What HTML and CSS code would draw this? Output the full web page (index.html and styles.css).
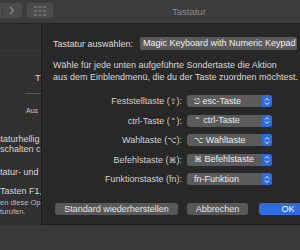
FILE: index.html
```html
<!DOCTYPE html>
<html lang="de">
<head>
<meta charset="utf-8">
<title>Tastatur</title>
<link rel="stylesheet" href="styles.css">
</head>
<body>
<div class="toolbar">
  <div class="seg">
    <span class="seg-div"></span>
    <svg class="chev" width="6" height="9" viewBox="0 0 6 9"><path d="M1 1 L4.5 4.5 L1 8" fill="none" stroke="#8a8a8a" stroke-width="1.3"/></svg>
  </div>
  <div class="gridbtn">
    <svg width="12" height="10" viewBox="0 0 12 10">
      <g fill="#6e6e6e">
        <rect x="0" y="0" width="3" height="2"/><rect x="4.5" y="0" width="3" height="2"/><rect x="9" y="0" width="3" height="2"/>
        <rect x="0" y="4" width="3" height="2"/><rect x="4.5" y="4" width="3" height="2"/><rect x="9" y="4" width="3" height="2"/>
        <rect x="0" y="8" width="3" height="2"/><rect x="4.5" y="8" width="3" height="2"/><rect x="9" y="8" width="3" height="2"/>
      </g>
    </svg>
  </div>
  <div class="title">Tastatur</div>
</div>
<div class="main">
  <div class="side">
    <div class="tabline"></div>
    <div class="s-t">T</div>
    <div class="s-track"></div>
    <div class="s-aus">Aus</div>
    <div class="s-l s-l1">staturhellig</div>
    <div class="s-l s-l2">schalten c</div>
    <div class="s-l s-l3">tatur- und</div>
    <div class="s-l s-l4">Tasten F1,</div>
    <div class="s-sm s-l5">en diese Op</div>
    <div class="s-sm s-l6">turufen.</div>
  </div>
  <div class="sheet">
    <div class="head">
      <div class="head-label">Tastatur auswählen:</div>
      <div class="head-pop">Magic Keyboard with Numeric Keypad</div>
    </div>
    <p class="desc">Wähle für jede unten aufgeführte Sondertaste die Aktion<br>aus dem Einblendmenü, die du der Taste zuordnen möchtest.</p>
    <div class="rows">
      <div class="lbl">Feststelltaste (<span class="sym">⇪</span>):</div>
      <div class="pop"><span class="pop-text"><span class="sym">⎋</span> esc-Taste</span><span class="step"><svg width="6" height="9" viewBox="0 0 6 9"><path d="M1 3.5 L3 1.5 L5 3.5 M1 5.5 L3 7.5 L5 5.5" fill="none" stroke="#fff" stroke-width="1"/></svg></span></div>
      <div class="lbl">ctrl-Taste (<span class="sym">⌃</span>):</div>
      <div class="pop"><span class="pop-text"><span class="sym">⌃</span> ctrl-Taste</span><span class="step"><svg width="6" height="9" viewBox="0 0 6 9"><path d="M1 3.5 L3 1.5 L5 3.5 M1 5.5 L3 7.5 L5 5.5" fill="none" stroke="#fff" stroke-width="1"/></svg></span></div>
      <div class="lbl">Wahltaste (<span class="sym">⌥</span>):</div>
      <div class="pop"><span class="pop-text"><span class="sym">⌥</span> Wahltaste</span><span class="step"><svg width="6" height="9" viewBox="0 0 6 9"><path d="M1 3.5 L3 1.5 L5 3.5 M1 5.5 L3 7.5 L5 5.5" fill="none" stroke="#fff" stroke-width="1"/></svg></span></div>
      <div class="lbl">Befehlstaste (<span class="sym">⌘</span>):</div>
      <div class="pop"><span class="pop-text"><span class="sym">⌘</span> Befehlstaste</span><span class="step"><svg width="6" height="9" viewBox="0 0 6 9"><path d="M1 3.5 L3 1.5 L5 3.5 M1 5.5 L3 7.5 L5 5.5" fill="none" stroke="#fff" stroke-width="1"/></svg></span></div>
      <div class="lbl">Funktionstaste (fn):</div>
      <div class="pop"><span class="pop-text">fn-Funktion</span><span class="step"><svg width="6" height="9" viewBox="0 0 6 9"><path d="M1 3.5 L3 1.5 L5 3.5 M1 5.5 L3 7.5 L5 5.5" fill="none" stroke="#fff" stroke-width="1"/></svg></span></div>
    </div>
    <div class="buttons">
      <div class="btn btn-std">Standard wiederherstellen</div>
      <div class="btn btn-cancel">Abbrechen</div>
      <div class="btn btn-ok">OK</div>
    </div>
  </div>
</div>
<div class="bottom"></div>
</body>
</html>
```
FILE: styles.css
```css
html, body {
  margin: 0;
  padding: 0;
}
body {
  width: 300px;
  height: 250px;
  overflow: hidden;
  background: #393939;
  font-family: "Liberation Sans", Arial, sans-serif;
  font-size: 9px;
  color: #dcdcdc;
}
.toolbar {
  height: 23px;
  border-bottom: 1px solid #242424;
  background: #3c3c3c;
  display: flex;
  align-items: flex-start;
}
.seg {
  margin-left: -20px;
  margin-top: 3px;
  width: 42px;
  height: 15px;
  border-radius: 3px;
  background: #4b4b4b;
  position: relative;
  display: flex;
  align-items: center;
  justify-content: flex-end;
  padding-right: 7px;
  box-sizing: border-box;
}
.seg-div {
  position: absolute;
  left: 22px;
  top: 2px;
  width: 1px;
  height: 11px;
  background: #3a3a3a;
}
.gridbtn {
  margin-left: 5px;
  margin-top: 3px;
  width: 26px;
  height: 15px;
  border-radius: 3px;
  background: #4b4b4b;
  display: flex;
  align-items: center;
  justify-content: center;
}
.title {
  margin-left: 119px;
  margin-top: 6px;
  font-size: 9.5px;
  line-height: 12px;
  color: #8d8d8d;
}
.main {
  display: flex;
  height: 201px;
}
.side {
  width: 41px;
  background: #313131;
  overflow: hidden;
  white-space: nowrap;
  color: #d6d6d6;
}
.tabline {
  margin-top: 26px;
  height: 1px;
  background: #3d3d3d;
}
.s-t {
  margin-top: 21px;
  padding-left: 35px;
  font-size: 9.5px;
  line-height: 12px;
}
.s-track {
  margin-top: 9px;
  margin-left: 25px;
  height: 1px;
  background: #5c5c5c;
}
.s-aus {
  margin-top: 12px;
  padding-left: 26px;
  font-size: 7px;
  line-height: 9px;
  color: #c4c4c4;
}
.s-l {
  font-size: 9px;
  line-height: 10px;
}
.s-l1 { margin-top: 19px; margin-left: -4px; }
.s-l2 { margin-top: 0; margin-left: 0; }
.s-l3 { margin-top: 13px; margin-left: 0; }
.s-l4 { margin-top: 9px; margin-left: 0; }
.s-sm {
  font-size: 7.5px;
  line-height: 9px;
  color: #bdbdbd;
}
.s-l5 { margin-top: 2px; }
.s-l6 { margin-top: 0; }
.sheet {
  flex: 1;
  border-left: 1px solid #1a1a1a;
  border-bottom: 1px solid #1c1c1c;
  background: #282828;
  padding: 13px 0 0 11px;
  box-sizing: border-box;
  white-space: nowrap;
  overflow: hidden;
}
.head {
  display: flex;
  align-items: center;
  height: 13px;
}
.head-label {
  width: 87px;
  color: #dedede;
}
.head-pop {
  width: 157px;
  height: 13px;
  line-height: 13px;
  background: #5a5a5a;
  border-radius: 2px;
  padding-left: 3px;
  box-sizing: border-box;
  color: #f0f0f0;
  overflow: hidden;
}
.desc {
  margin: 10px 0 0 0;
  line-height: 11.5px;
  color: #d8d8d8;
}
.rows {
  margin-top: 12px;
  display: grid;
  grid-template-columns: 129px 85px;
  column-gap: 5px;
  row-gap: 6.5px;
}
.lbl {
  text-align: right;
  line-height: 12px;
  color: #d2d2d2;
}
.sym {
  font-family: "DejaVu Sans", sans-serif;
  font-size: 8px;
}
.pop {
  height: 12px;
  background: #5b5b5b;
  border-radius: 3px;
  display: flex;
  align-items: center;
  overflow: hidden;
}
.pop-text {
  flex: 1;
  padding-left: 7px;
  line-height: 12px;
  color: #ececec;
}
.step {
  width: 10px;
  height: 12px;
  background: #2e6bdc;
  display: flex;
  align-items: center;
  justify-content: center;
}
.buttons {
  margin-top: 18px;
  display: flex;
  align-items: center;
}
.btn {
  height: 12px;
  line-height: 12px;
  border-radius: 3px;
  background: #585858;
  color: #e4e4e4;
  text-align: center;
  flex: none;
}
.btn-std {
  margin-left: 2px;
  width: 123px;
}
.btn-cancel {
  margin-left: 9px;
  width: 61px;
}
.btn-ok {
  margin-left: 11px;
  width: 58px;
  background: #2d6ddf;
  color: #ffffff;
}
.bottom {
  height: 25px;
  background: #393939;
}
```
